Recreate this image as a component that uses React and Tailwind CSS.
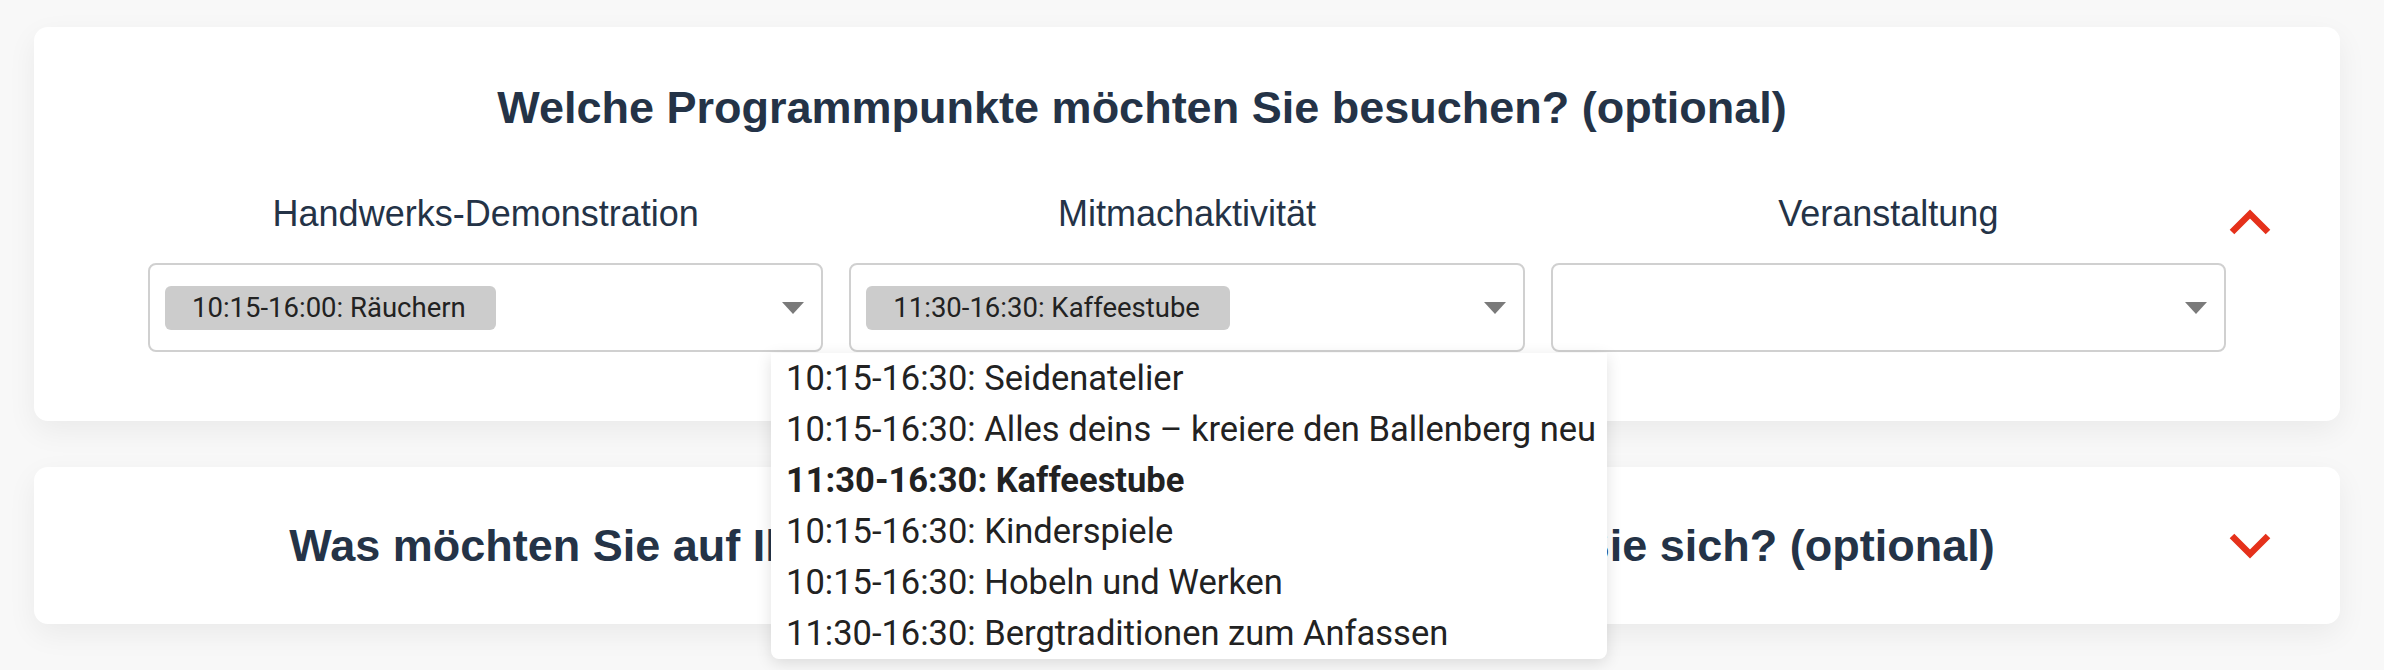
import React from 'react';

const options = [
  { label: '10:15-16:30: Seidenatelier' },
  { label: '10:15-16:30: Alles deins – kreiere den Ballenberg neu' },
  { label: '11:30-16:30: Kaffeestube', selected: true },
  { label: '10:15-16:30: Kinderspiele' },
  { label: '10:15-16:30: Hobeln und Werken' },
  { label: '11:30-16:30: Bergtraditionen zum Anfassen' },
];

const Chevron = ({ up }) => (
  <svg width="44" height="27" viewBox="0 0 44 27" className="block">
    <polyline
      points={up ? '4,23 22,5 40,23' : '4,4 22,22 40,4'}
      fill="none"
      stroke="#e5311b"
      strokeWidth="6.5"
      strokeLinejoin="miter"
    />
  </svg>
);

const Caret = () => (
  <svg width="22" height="12" viewBox="0 0 22 12" className="block shrink-0">
    <polygon points="0,0 22,0 11,12" fill="#7a7a7a" />
  </svg>
);

const Select = ({ value }) => (
  <div className="h-[89px] border-2 border-[#d0d0d0] rounded-[8px] bg-white flex items-center pl-[15px] pr-[17px]">
    <div className="flex-1 flex">
      {value && (
        <span className="h-[44px] flex items-center bg-[#cccccc] rounded-[6px] pl-[27px] pr-[30px] text-[27.5px] text-[#222] font-['Roboto',sans-serif]">
          {value}
        </span>
      )}
    </div>
    <Caret />
  </div>
);

const Column = ({ label, value }) => (
  <div className="flex flex-col">
    <div className="text-center text-[36px] leading-[43px] text-[#243347] mb-[28px]">{label}</div>
    <Select value={value} />
  </div>
);

export default function App() {
  return (
    <div className="min-h-[670px] bg-[#f8f8f8] pl-[34px] pr-[44px] pt-[27px] font-['Liberation_Sans',Arial,sans-serif]">
      {/* Programmpunkte, aufgeklappt */}
      <div className="relative z-10 bg-white rounded-[14px] shadow-[0_10px_30px_rgba(0,0,0,0.06)] pt-[54px] pb-[69px] mb-[46px]">
        <h2 className="pl-[22px] pr-[112px] text-center text-[45px] leading-[54px] font-bold text-[#243347]">
          Welche Programmpunkte möchten Sie besuchen? (optional)
        </h2>
        <div className="flex items-start pl-[114px] mt-[57px]">
          <div className="flex-1 grid grid-cols-3 gap-[26px]">
            <Column label="Handwerks-Demonstration" value="10:15-16:00: Räuchern" />
            <Column label="Mitmachaktivität" value="11:30-16:30: Kaffeestube" />
            <Column label="Veranstaltung" />
          </div>
          <div className="w-[114px] pl-[2px] pt-[17px]">
            <Chevron up />
          </div>
        </div>

        {/* offene Auswahlliste */}
        <ul className="absolute left-[737px] top-[326px] w-[836px] bg-white rounded-b-[8px] shadow-[0_4px_16px_rgba(0,0,0,0.12)] pl-[15px] font-['Roboto',sans-serif] text-[#222] text-[34.5px] leading-[51px]">
          {options.map((o) => (
            <li key={o.label} className={o.selected ? 'font-bold whitespace-nowrap' : 'whitespace-nowrap'}>
              {o.label}
            </li>
          ))}
        </ul>
      </div>

      {/* Interessen, zugeklappt */}
      <div className="bg-white rounded-[14px] shadow-[0_10px_30px_rgba(0,0,0,0.06)] h-[157px] flex items-center">
        <h2 className="flex-1 pl-[22px] text-center text-[45px] leading-[54px] font-bold text-[#243347] whitespace-nowrap">
          Was möchten Sie auf Ihrem Besuch erleben? Worauf freuen Sie sich? (optional)
        </h2>
        <div className="w-[112px]">
          <Chevron />
        </div>
      </div>
    </div>
  );
}
